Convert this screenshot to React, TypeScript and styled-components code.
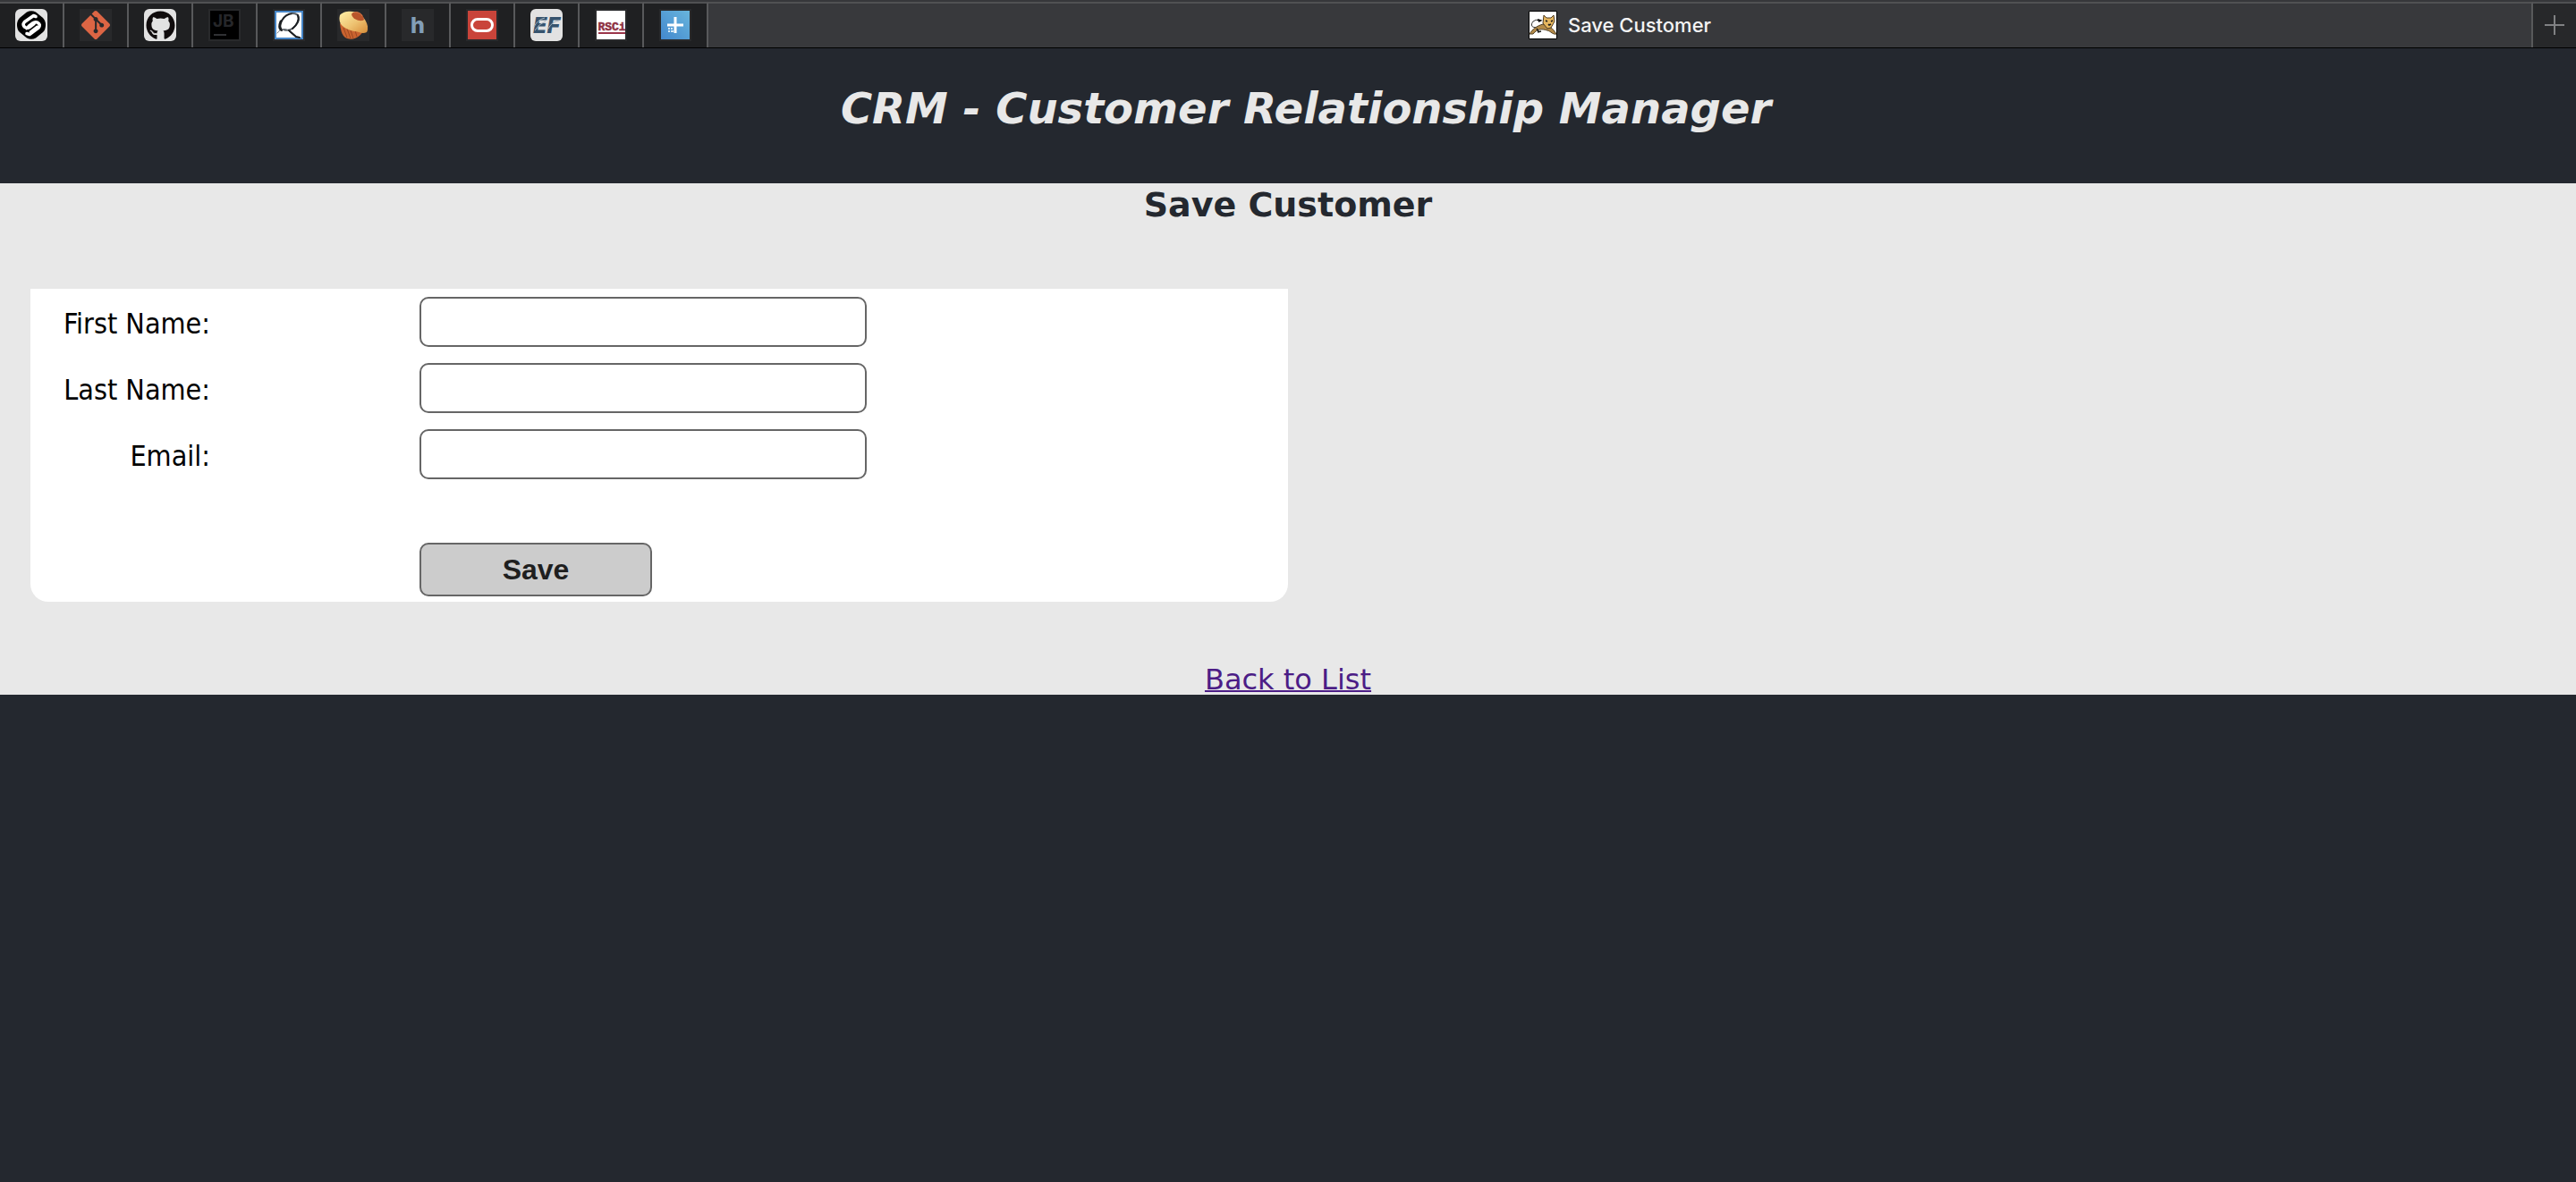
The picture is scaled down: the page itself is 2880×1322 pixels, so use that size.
import React from "react";
import styled, { createGlobalStyle } from "styled-components";
import { FaGithub } from "react-icons/fa";
import { SiGit } from "react-icons/si";

const wide = `Verdana, "DejaVu Sans", sans-serif`;
const narrow = `Tahoma, "DejaVu Sans Condensed", "DejaVu Sans", sans-serif`;
const sans = `Inter, "Liberation Sans", sans-serif`;

const GlobalStyle = createGlobalStyle`
  *, *::before, *::after { box-sizing: border-box; }
  body {
    margin: 0;
    background: #24282f;
    color: #000;
    font-family: ${wide};
    font-size: 32px;
  }
`;

const TabStrip = styled.nav`
  display: flex;
  height: 54px;
  background: #1f2022;
  border-top: 2px solid #37383b;
  border-bottom: 1px solid #000;
`;

const Tab = styled.button`
  flex: none;
  display: flex;
  align-items: center;
  justify-content: center;
  width: 72px;
  padding: 0 0 1px;
  border: 0;
  border-top: 2px solid #505153;
  border-right: 2px solid #58595b;
  background: #1f2022;
`;

const ActiveTab = styled(Tab)`
  flex: 1;
  gap: 12px;
  background: #38393c;
  color: #f4f4f4;
  font: 500 22px/28px ${sans};
`;

const NewTab = styled(Tab)`
  width: 48px;
  border-right: 0;
  background: #27282a;
`;

const Tile = styled.span<{ $light?: boolean }>`
  display: flex;
  align-items: center;
  justify-content: center;
  width: 36px;
  height: 36px;
  overflow: hidden;
  border-radius: ${(p) => (p.$light ? "6px" : "0")};
  background: ${(p) => (p.$light ? "#e2e2e2" : "#28292b")};
`;

const Header = styled.header`
  height: 151px;
  padding: 40px 0 0 40px;
  text-align: center;
`;

const Title = styled.h1`
  margin: 0;
  color: #e8e8e8;
  font: italic bold 48px/54px ${wide};
`;

const Main = styled.main`
  display: flex;
  flex-direction: column;
  background: #e8e8e8;
`;

const Heading = styled.h2`
  margin: 0;
  color: #24282f;
  font: bold 38px/48px ${wide};
  text-align: center;
`;

const Form = styled.form`
  display: grid;
  grid-template-columns: 201px 500px;
  gap: 18px 234px;
  align-items: center;
  width: calc(50% - 34px);
  margin: 70px 0 70px 34px;
  padding: 9px 0 6px;
  border-radius: 0 0 20px 20px;
  background: #fff;
`;

const Label = styled.label`
  padding-top: 4px;
  font: 32px/40px ${narrow};
  text-align: right;
`;

const Field = styled.input`
  width: 100%;
  height: 56px;
  padding: 0 10px;
  border: 2px solid #666;
  border-radius: 10px;
  background: #fff;
  font: 28px/36px ${narrow};
`;

const SaveButton = styled.button`
  grid-column: 2;
  width: 260px;
  height: 60px;
  margin-top: 53px;
  border: 2px solid #666;
  border-radius: 10px;
  background: #ccc;
  color: #1f1f1f;
  font: bold 32px/40px "Liberation Sans", Arial, sans-serif;
`;

const BackLink = styled.a`
  align-self: center;
  color: #4c1d86;
  font: 32px/34px ${wide};
  text-decoration-thickness: 2px;
`;

const Svg = ({ size = 32, children }: { size?: number; children: React.ReactNode }) => (
  <svg width={size} height={size} viewBox={`0 0 ${size} ${size}`} aria-hidden="true">
    {children}
  </svg>
);

const StackIcon = () => (
  <Svg>
    <path d="M11 1.500Q16-1 21 1.500L29 8Q32 11 32 16T29 24L21 30.500Q16 33 11 30.500L3 24Q0 21 0 16T3 8Z" fill="#000" />
    <g fill="none" stroke="#fff" strokeWidth="3.600" strokeLinecap="round" strokeLinejoin="round">
      <path d="M21 6.500 18.500 5.500 8.500 12.500Q5.500 16 9 18.500 12 20 14.500 18L19 14.500" />
      <path d="M11 25.500 14 26.500 24 19Q27 15.500 23 13.200 20 12 17.500 14L13 17.500" />
    </g>
    <path d="m10 21 12-9M14 24l9-7" stroke="#fff" strokeWidth="2" />
  </Svg>
);

const JetBrainsIcon = () => (
  <Svg>
    <path d="M0 0h32v32H0z" fill="#000" />
    <text x="3" y="18" fill="#26272a" fontFamily="Inter, sans-serif" fontSize="19" fontWeight="700">JB</text>
    <path d="M4 26h14v2H4z" fill="#303134" />
  </Svg>
);

const QuillIcon = () => (
  <Svg>
    <path d="M1 1h30v30H1z" fill="#fff" stroke="#4786c7" strokeWidth="2" />
    <g fill="none" stroke="#1b1e21" strokeLinecap="round">
      <path d="M8 22C3 17 9 4 20 3" strokeWidth="2" />
      <path d="M20 3c9 0 8 8 4 13-4 5-9 7-14 5" strokeWidth="2" stroke="#596067" />
      <path d="M26 5c2 5-1 11-6 15" strokeWidth="2" />
      <path d="M3 25c4-6 10-6 14-1l6 5" strokeWidth="1" stroke="#777d83" />
      <path d="m16 22 8 7 4 1" strokeWidth="2" />
      <path d="M7 12c-2 5-2 7 0 9" strokeWidth="3" />
    </g>
  </Svg>
);

const MuffinIcon = () => (
  <Svg>
    <defs>
      <linearGradient id="cream" x1="0" y1="0" x2="1" y2="1">
        <stop stopColor="#fff0a8" />
        <stop offset=".55" stopColor="#edc170" />
        <stop offset="1" stopColor="#d68b38" />
      </linearGradient>
    </defs>
    <path d="M1 14c1 8 2 13 6 16 5 3 12 2 17-3l4-5Z" fill="#c9632f" />
    <path d="m5 19 4 11m0-10 4 11m0-9 3 9m2-9 2 7" stroke="#9c4822" strokeWidth="1" />
    <path d="M1 5C5 0 18-1 25 5c6 6 9 14 6 19-5 3-9-1-14-1C8 21-2 17 1 5Z" fill="url(#cream)" />
    <path d="M14 4c2-5 13-3 14 6-3 3-13 0-14-6Z" fill="#b9552b" />
    <path d="M17 2c4-1 8 1 9 4" stroke="#d67848" strokeWidth="1" fill="none" />
  </Svg>
);

const LetterIcon = () => (
  <Svg>
    <text x="16" y="25" textAnchor="middle" fill="#829eb7" fontFamily="Inter, sans-serif" fontSize="25" fontWeight="800">h</text>
  </Svg>
);

const OracleIcon = () => (
  <Svg>
    <path d="M0 0h32v32H0z" fill="#c9443a" />
    <rect x="4.500" y="9.500" width="23" height="13" rx="6.500" fill="none" stroke="#fff" strokeWidth="3" />
  </Svg>
);

const EfIcon = () => (
  <Svg size={36}>
    <text x="18" y="27" textAnchor="middle" fill="#36536d" fontFamily="Inter, sans-serif" fontSize="25" fontStyle="italic" fontWeight="800">EF</text>
    <path d="M4 20q4-8 12-10M5 24q5-8 12-10M20 22q4-8 12-9" fill="none" stroke="#a6b3bd" strokeWidth="1" />
  </Svg>
);

const RsciIcon = () => (
  <Svg>
    <path d="M0 0h32v32H0z" fill="#fff" />
    <text x="17" y="22" textAnchor="middle" fill="#8d2f42" fontFamily="Liberation Sans Narrow, Liberation Mono, monospace" fontSize="13" fontWeight="700" stroke="#8d2f42" strokeWidth=".5">RSCi</text>
    <path d="M2 24h30v2H2z" fill="#9b354a" />
  </Svg>
);

const PlusTileIcon = () => (
  <Svg>
    <defs>
      <linearGradient id="sky" x1="0" y1="1" x2="1" y2="0">
        <stop stopColor="#4388ce" />
        <stop offset="1" stopColor="#68b5dc" />
      </linearGradient>
    </defs>
    <path d="M0 0h32v32H0z" fill="url(#sky)" />
    <path d="M14.500 7h3v7.500H25v3h-7.500V25h-3v-7.500H7v-3h7.500Z" fill="#fff" />
    <path d="M8 19h2v2H8zm3 0h2v2h-2zM8 22h2v2H8zm3 0h3v2h-3z" fill="#d5e8f6" />
  </Svg>
);

const TomcatIcon = () => (
  <Svg>
    <path d="M.5.500h31v31H.5z" fill="#fff" stroke="#000" />
    <path d="M13 17C5 21 1 17 5 12q3-3 7-1" fill="none" stroke="#333" strokeWidth="1" />
    <path d="m10 10 3 1-2 1" fill="none" stroke="#111" strokeWidth="2" />
    <path d="M1 26c3-5 8-9 15-11l8 3c3 2 5 5 7 8-4 1-6-3-10-4-7-2-11-2-16 4Z" fill="#b38a48" stroke="#4f4026" />
    <path d="m17 5 3 3h5l3-3 1 7-4 7-4 1-5-6Z" fill="#e6b65e" stroke="#4d3b22" />
    <path d="m19 11 2 1m4 0 2-1m-5 4 1 1 2-1M9 20l2 3m3 0-4 1" stroke="#191919" strokeWidth="1.500" fill="none" />
  </Svg>
);

const pinned = [
  { name: "Stack", light: true, icon: <StackIcon /> },
  { name: "Git", icon: <SiGit size={32} color="#dc6544" /> },
  { name: "GitHub", light: true, icon: <FaGithub size={33} color="#100c0d" /> },
  { name: "JetBrains", icon: <JetBrainsIcon /> },
  { name: "Quill", icon: <QuillIcon /> },
  { name: "Muffin", icon: <MuffinIcon /> },
  { name: "H", icon: <LetterIcon /> },
  { name: "Oracle", icon: <OracleIcon /> },
  { name: "EF", light: true, icon: <EfIcon /> },
  { name: "RSCi", icon: <RsciIcon /> },
  { name: "Plus", icon: <PlusTileIcon /> },
];

const fields = [
  { id: "firstName", label: "First Name:", type: "text" },
  { id: "lastName", label: "Last Name:", type: "text" },
  { id: "email", label: "Email:", type: "text" },
];

export default function App() {
  return (
    <>
      <GlobalStyle />
      <TabStrip>
        {pinned.map((tab) => (
          <Tab key={tab.name} type="button" aria-label={tab.name}>
            <Tile $light={tab.light}>{tab.icon}</Tile>
          </Tab>
        ))}
        <ActiveTab type="button">
          <TomcatIcon />
          Save Customer
        </ActiveTab>
        <NewTab type="button" aria-label="New tab">
          <Svg size={22}>
            <path d="M10 0h2v22h-2zM0 10h22v2H0z" fill="#808183" />
          </Svg>
        </NewTab>
      </TabStrip>
      <Header>
        <Title>CRM - Customer Relationship Manager</Title>
      </Header>
      <Main>
        <Heading>Save Customer</Heading>
        <Form onSubmit={(e) => e.preventDefault()}>
          {fields.map((f) => (
            <React.Fragment key={f.id}>
              <Label htmlFor={f.id}>{f.label}</Label>
              <Field id={f.id} name={f.id} type={f.type} />
            </React.Fragment>
          ))}
          <SaveButton type="submit">Save</SaveButton>
        </Form>
        <BackLink href="#list">Back to List</BackLink>
      </Main>
    </>
  );
}
